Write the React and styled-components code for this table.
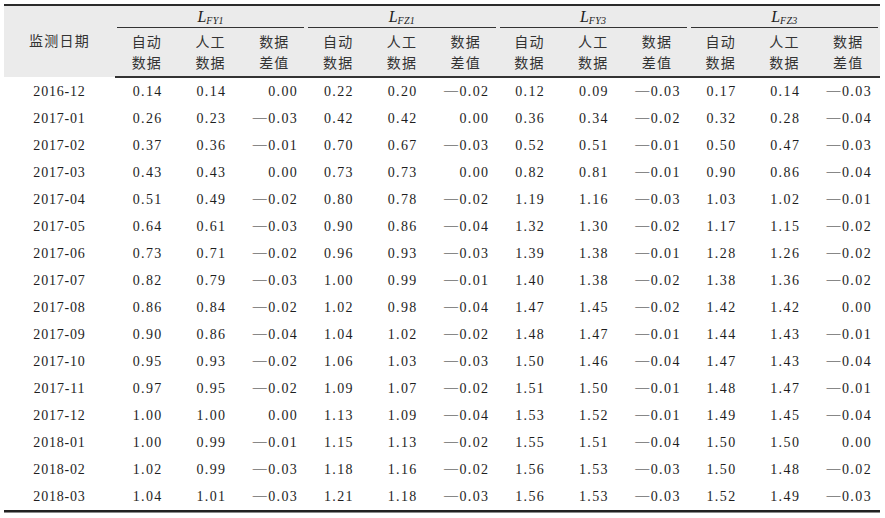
import React from 'react';
import styled, { createGlobalStyle } from 'styled-components';

const GlobalStyle = createGlobalStyle`
  body {
    margin: 0;
    background: #ffffff;
  }
`;

const rows = [
  ['2016-12', [0.14, 0.14, 0.0], [0.22, 0.2, -0.02], [0.12, 0.09, -0.03], [0.17, 0.14, -0.03]],
  ['2017-01', [0.26, 0.23, -0.03], [0.42, 0.42, 0.0], [0.36, 0.34, -0.02], [0.32, 0.28, -0.04]],
  ['2017-02', [0.37, 0.36, -0.01], [0.7, 0.67, -0.03], [0.52, 0.51, -0.01], [0.5, 0.47, -0.03]],
  ['2017-03', [0.43, 0.43, 0.0], [0.73, 0.73, 0.0], [0.82, 0.81, -0.01], [0.9, 0.86, -0.04]],
  ['2017-04', [0.51, 0.49, -0.02], [0.8, 0.78, -0.02], [1.19, 1.16, -0.03], [1.03, 1.02, -0.01]],
  ['2017-05', [0.64, 0.61, -0.03], [0.9, 0.86, -0.04], [1.32, 1.3, -0.02], [1.17, 1.15, -0.02]],
  ['2017-06', [0.73, 0.71, -0.02], [0.96, 0.93, -0.03], [1.39, 1.38, -0.01], [1.28, 1.26, -0.02]],
  ['2017-07', [0.82, 0.79, -0.03], [1.0, 0.99, -0.01], [1.4, 1.38, -0.02], [1.38, 1.36, -0.02]],
  ['2017-08', [0.86, 0.84, -0.02], [1.02, 0.98, -0.04], [1.47, 1.45, -0.02], [1.42, 1.42, 0.0]],
  ['2017-09', [0.9, 0.86, -0.04], [1.04, 1.02, -0.02], [1.48, 1.47, -0.01], [1.44, 1.43, -0.01]],
  ['2017-10', [0.95, 0.93, -0.02], [1.06, 1.03, -0.03], [1.5, 1.46, -0.04], [1.47, 1.43, -0.04]],
  ['2017-11', [0.97, 0.95, -0.02], [1.09, 1.07, -0.02], [1.51, 1.5, -0.01], [1.48, 1.47, -0.01]],
  ['2017-12', [1.0, 1.0, 0.0], [1.13, 1.09, -0.04], [1.53, 1.52, -0.01], [1.49, 1.45, -0.04]],
  ['2018-01', [1.0, 0.99, -0.01], [1.15, 1.13, -0.02], [1.55, 1.51, -0.04], [1.5, 1.5, 0.0]],
  ['2018-02', [1.02, 0.99, -0.03], [1.18, 1.16, -0.02], [1.56, 1.53, -0.03], [1.5, 1.48, -0.02]],
  ['2018-03', [1.04, 1.01, -0.03], [1.21, 1.18, -0.03], [1.56, 1.53, -0.03], [1.52, 1.49, -0.03]],
];

const groups = ['FY1', 'FZ1', 'FY3', 'FZ3'];

const subHeads = [
  ['自动', '数据'],
  ['人工', '数据'],
  ['数据', '差值'],
];

const Wrap = styled.div`
  margin: 4px 0 0 4px;
  width: 876px;
  border-top: 2px solid #2b2b2b;
  border-bottom: 1px solid #8a8a8a;
`;

const Table = styled.table`
  width: 876px;
  table-layout: fixed;
  border-collapse: collapse;
  font-family: 'Liberation Serif', 'Noto Sans CJK SC', serif;
  font-size: 14px;
  color: #1e1e1e;
  border-bottom: 2px solid #222;
`;

const Head = styled.thead`
  background: #ebebeb;
  tr:last-child th {
    border-bottom: 2px solid #333;
  }
`;

const Th = styled.th`
  font-weight: 400;
  letter-spacing: 1.2px;
  padding: 0;
  line-height: 21px;
  text-align: center;
  vertical-align: middle;
  color: #333;
`;

const GroupTh = styled.th`
  font-weight: 400;
  padding: 0;
  height: 22px;
  vertical-align: bottom;
`;

const GroupTitle = styled.div`
  margin: 0 2px;
  height: 21px;
  line-height: 21px;
  border-bottom: 1px solid #333;
  text-align: center;
  font-style: italic;
  font-size: 16px;
  color: #222;
  sub {
    font-size: 10px;
    vertical-align: -2px;
    letter-spacing: 0.3px;
  }
`;

const SubTh = styled(Th)`
  height: 47px;
  padding-top: 1px;
`;

const Tr = styled.tr`
  height: 27px;
`;

const Td = styled.td`
  padding: 0 ${(p) => (p.$diff ? 8 : 16)}px 0 0;
  line-height: 27px;
  text-align: right;
  letter-spacing: 1.4px;
  white-space: nowrap;
`;

const Minus = styled.span`
  position: relative;
  top: -1px;
`;

const DateTd = styled.td`
  padding: 0;
  line-height: 27px;
  text-align: center;
  letter-spacing: 0.8px;
`;

function Num({ v }) {
  if (v < 0) {
    return (
      <>
        <Minus>—</Minus>
        {Math.abs(v).toFixed(2)}
      </>
    );
  }
  return v.toFixed(2);
}

export default function App() {
  return (
    <>
      <GlobalStyle />
      <Wrap>
        <Table>
          <colgroup>
            <col style={{ width: 111 }} />
            {Array.from({ length: 12 }).map((_, i) => (
              <col key={i} style={{ width: 63.75 }} />
            ))}
          </colgroup>
          <Head>
            <tr>
              <Th rowSpan={2}>监测日期</Th>
              {groups.map((s) => (
                <GroupTh key={s} colSpan={3}>
                  <GroupTitle>
                    L<sub>{s}</sub>
                  </GroupTitle>
                </GroupTh>
              ))}
            </tr>
            <tr>
              {groups.map((s) =>
                subHeads.map(([a, b]) => (
                  <SubTh key={s + a + b}>
                    {a}
                    <br />
                    {b}
                  </SubTh>
                ))
              )}
            </tr>
          </Head>
          <tbody>
            {rows.map(([date, ...vals]) => (
              <Tr key={date}>
                <DateTd>{date}</DateTd>
                {vals.map((g, gi) =>
                  g.map((v, i) => (
                    <Td key={gi + '-' + i} $diff={i === 2}>
                      <Num v={v} />
                    </Td>
                  ))
                )}
              </Tr>
            ))}
          </tbody>
        </Table>
      </Wrap>
    </>
  );
}
